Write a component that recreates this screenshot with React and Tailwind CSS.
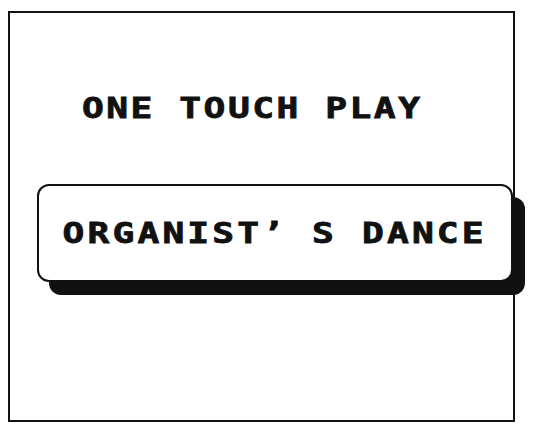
import React from "react";

const mono = { fontFamily: '"DejaVu Sans Mono", "Liberation Mono", monospace' };

export default function App() {
  return (
    <div className="w-[559px] h-[426px] bg-white overflow-hidden">
      {/* Screen frame */}
      <div className="ml-[8px] mt-[11px] w-[507px] h-[411px] border-2 border-[#111] flex flex-col">
        {/* Title */}
        <div className="pt-[81px] pr-[18px] flex justify-center">
          <span
            style={mono}
            className="inline-block text-[29px] leading-none font-bold tracking-[2px] text-[#111] scale-x-[1.25] whitespace-pre [-webkit-text-stroke:0.8px_#111]"
          >
            ONE TOUCH PLAY
          </span>
        </div>

        {/* Song button */}
        <div className="mt-[61px] ml-[27px] w-[476px] h-[98px] border-2 border-[#111] rounded-xl bg-white shadow-[12px_13px_0_0_#111] flex items-center justify-center">
          <span
            style={mono}
            className="inline-block text-[29px] leading-none font-bold tracking-[2.5px] text-[#111] scale-x-[1.25] whitespace-pre [-webkit-text-stroke:0.8px_#111]"
          >
            ORGANIST’ S DANCE
          </span>
        </div>
      </div>
    </div>
  );
}
